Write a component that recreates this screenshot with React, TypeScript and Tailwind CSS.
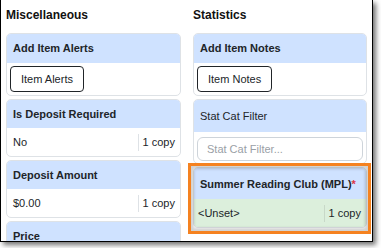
import React from "react";

function Card({ title, bold = true, children, green = false, titleH = "h-[29px]" }: { title: React.ReactNode; bold?: boolean; children: React.ReactNode; green?: boolean; titleH?: string }) {
    return (
        <div className="border border-[#dee2e6] rounded-[5px] overflow-hidden bg-white">
            <div className={`${titleH} flex items-center px-[6px] bg-[#cfe2ff] text-[11px] text-[#212529] ${bold ? "font-bold" : ""}`}>
                {title}
            </div>
            <div className={green ? "bg-[#dcefdc]" : ""}>{children}</div>
        </div>
    );
}

function CopyRow({ value, green = false }: { value: string; green?: boolean }) {
    return (
        <div className={`h-[28px] flex items-center text-[11px] text-[#212529] ${green ? "pl-[4px]" : "pl-[6px]"}`}>
            <span className="flex-1">{value}</span>
            <span className={`h-[17px] border-l ${green ? "border-[#c8d8c8]" : "border-[#dee2e6]"} pl-[4px] pr-[5px] flex items-center`}>1 copy</span>
        </div>
    );
}

function Btn({ label }: { label: string }) {
    return (
        <div className="px-[3px] pt-[3px] pb-[3px]">
            <button className="h-[26px] px-[10px] border border-[#212529] rounded-[4px] bg-white text-[11px] text-[#212529]">{label}</button>
        </div>
    );
}

export default function App() {
    return (
        <div className="w-[381px] h-[248px] bg-white" style={{ fontFamily: '"Liberation Sans", Arial, sans-serif' }}>
            <div className="relative w-[373px] h-[242px] border-l border-r border-b border-black bg-white overflow-hidden shadow-[3px_3px_5px_rgba(0,0,0,0.55)]">
                <div className="grid grid-cols-[175px_174px] gap-x-[12px] pl-[5px]">
                    <div>
                        <div className="h-[33px] pt-[6px] text-[12px] font-bold text-[#111]">Miscellaneous</div>
                        <div className="flex flex-col gap-[3px]">
                            <Card title="Add Item Alerts"><Btn label="Item Alerts" /></Card>
                            <Card title="Is Deposit Required" titleH="h-[28px]"><CopyRow value="No" /></Card>
                            <Card title="Deposit Amount" titleH="h-[28px]"><CopyRow value="$0.00" /></Card>
                            <Card title="Price" titleH="h-[28px]"><CopyRow value="" /></Card>
                        </div>
                    </div>
                    <div>
                        <div className="h-[33px] pt-[6px] text-[12px] font-bold text-[#111]">Statistics</div>
                        <div className="flex flex-col gap-[3px]">
                            <Card title="Add Item Notes"><Btn label="Item Notes" /></Card>
                            <Card title="Stat Cat Filter" bold={false} titleH="h-[32px]">
                                <div className="px-[3px] pt-[5px] pb-[2px]">
                                    <div className="h-[24px] border border-[#ced4da] rounded-[6px] flex items-center px-[9px] text-[11px] text-[#9aa0a6]">Stat Cat Filter...</div>
                                </div>
                            </Card>
                            <Card title={<span>Summer Reading Club (MPL)<span className="text-[#dc3545]">*</span></span>} green titleH="h-[31px]">
                                <CopyRow value="<Unset>" green />
                            </Card>
                        </div>
                    </div>
                </div>
                <div className="absolute left-[187px] top-[163px] w-[183px] h-[71px] border-[3px] border-[#f58220] shadow-[inset_0_0_3px_3px_rgba(0,0,0,0.18)] pointer-events-none" />
            </div>
        </div>
    );
}
